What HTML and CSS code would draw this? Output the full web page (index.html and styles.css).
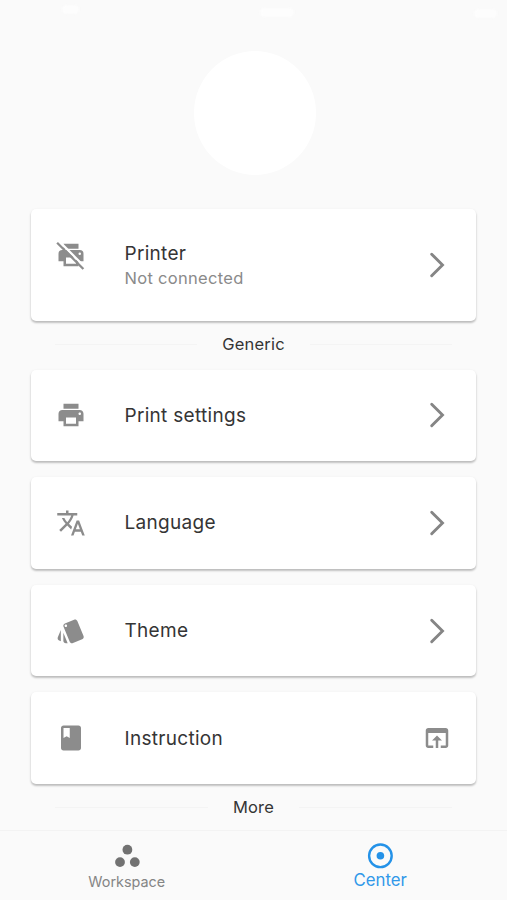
FILE: index.html
```
<!DOCTYPE html>
<html lang="en">
<head>
<meta charset="utf-8">
<title>Center</title>
<link rel="stylesheet" href="styles.css">
</head>
<body>
<div class="app">
  <header class="profile">
    <div class="status"><i class="carrier"></i><i class="clock"></i><i class="battery"></i></div>
    <div class="avatar"></div>
  </header>
  <main class="list">
    <section class="card card-tall">
      <svg class="icon icon-raised" viewBox="0 0 24 24"><path d="M6 3h12v4H6zM5 8h14a3 3 0 0 1 3 3v6h-4v4H6v-4H2v-6a3 3 0 0 1 3-3zm3 6v5h8v-5zm11-4a1 1 0 1 0 0 2a1 1 0 0 0 0-2z"/><path class="gap" d="M2.4.9 23.1 21.6"/><path class="slash" d="M.9 2.2 21.9 23.2"/></svg>
      <div class="label"><span class="title">Printer</span><span class="sub">Not connected</span></div>
      <svg class="trail" viewBox="0 0 30 30"><path class="chevron" d="M9.7 4.2 20.5 15 9.7 25.8"/></svg>
    </section>
    <div class="divider"><hr><span>Generic</span><hr></div>
    <section class="card">
      <svg class="icon" viewBox="0 0 24 24"><path d="M19 8H5c-1.66 0-3 1.34-3 3v6h4v4h12v-4h4v-6c0-1.66-1.34-3-3-3zm-3 11H8v-5h8v5zm3-7c-.55 0-1-.45-1-1s.45-1 1-1 1 .45 1 1-.45 1-1 1zm-1-9H6v4h12V3z"/></svg>
      <div class="label"><span class="title">Print settings</span></div>
      <svg class="trail" viewBox="0 0 30 30"><path class="chevron" d="M9.7 4.2 20.5 15 9.7 25.8"/></svg>
    </section>
    <section class="card">
      <svg class="icon" viewBox="0 0 24 24"><path d="M12.87 15.07l-2.54-2.51.03-.03c1.74-1.94 2.98-4.17 3.71-6.53H17V4h-7V2H8v2H1v1.99h11.17C11.5 7.92 10.44 9.75 9 11.35 8.07 10.32 7.3 9.19 6.69 8h-2c.73 1.63 1.73 3.17 2.98 4.56l-5.09 5.02L4 19l5-5 3.11 3.11.76-2.04zM18.5 10h-2L12 22h2l1.12-3h4.75L21 22h2l-4.5-12zm-2.62 7l1.62-4.33L19.12 17h-3.24z"/></svg>
      <div class="label"><span class="title">Language</span></div>
      <svg class="trail" viewBox="0 0 30 30"><path class="chevron" d="M9.7 4.2 20.5 15 9.7 25.8"/></svg>
    </section>
    <section class="card">
      <svg class="icon" viewBox="0 0 24 24"><path d="M2.53 19.65l1.34.56v-9.03l-2.43 5.86c-.41 1.02.08 2.19 1.09 2.61zm19.5-3.7L17.07 3.98c-.31-.75-1.04-1.21-1.81-1.23-.26 0-.53.04-.79.15L7.1 5.95c-.75.31-1.21 1.03-1.23 1.8-.01.27.04.54.15.8l4.96 11.97c.31.76 1.05 1.22 1.83 1.23.26 0 .52-.05.77-.15l7.36-3.05c1.02-.42 1.51-1.59 1.09-2.6zM7.88 8.75c-.55 0-1-.45-1-1s.45-1 1-1 1 .45 1 1-.45 1-1 1zm-2 11c0 1.1.9 2 2 2h1.45l-3.45-8.34v6.34z"/></svg>
      <div class="label"><span class="title">Theme</span></div>
      <svg class="trail" viewBox="0 0 30 30"><path class="chevron" d="M9.7 4.2 20.5 15 9.7 25.8"/></svg>
    </section>
    <section class="card">
      <svg class="icon" viewBox="0 0 24 24"><path d="M18 2H6c-1.1 0-2 .9-2 2v16c0 1.1.9 2 2 2h12c1.1 0 2-.9 2-2V4c0-1.1-.9-2-2-2zM6 4h5v8l-2.5-1.5L6 12V4z"/></svg>
      <div class="label"><span class="title">Instruction</span></div>
      <svg class="trail" viewBox="0 0 24 24"><path d="M19 4H5c-1.11 0-2 .9-2 2v12c0 1.1.89 2 2 2h4v-2H5V8h14v10h-4v2h4c1.1 0 2-.9 2-2V6c0-1.1-.89-2-2-2zm-7 6l-4 4h3v6h2v-6h3l-4-4z"/></svg>
    </section>
    <div class="divider"><hr><span>More</span><hr></div>
  </main>
  <nav class="tabs">
    <a class="tab"><svg viewBox="0 0 30 30"><circle cx="15.4" cy="8.7" r="4.9"/><circle cx="8" cy="21.1" r="4.9"/><circle cx="22.8" cy="21.1" r="4.9"/></svg><span>Workspace</span></a>
    <a class="tab active"><svg viewBox="0 0 30 30"><circle class="ring" cx="15.4" cy="14.8" r="11.3"/><circle cx="15.4" cy="14.8" r="3.8"/></svg><span>Center</span></a>
  </nav>
</div>
</body>
</html>
```

FILE: styles.css
```
body {
  margin: 0;
  background: #fafafa;
  color: #353535;
  font-family: Inter, "Liberation Sans", sans-serif;
}
.app {
  height: 900px;
  display: flex;
  flex-direction: column;
  overflow: hidden;
}
.profile {
  height: 209px;
  flex: none;
  display: flex;
  flex-direction: column;
  align-items: center;
}
.status {
  width: 475px;
  height: 51px;
  display: flex;
  justify-content: space-between;
  padding-top: 8px;
  box-sizing: border-box;
}
.status i {
  height: 9px;
  border-radius: 5px;
  background: #fdfdfd;
  filter: blur(1px);
}
.carrier { width: 17px; margin-left: 46px; margin-top: -3px; }
.clock { width: 34px; }
.battery { width: 23px; margin: 1px -6px 0 0; }
.avatar {
  width: 122px;
  height: 124px;
  margin-left: 2px;
  border-radius: 50%;
  background: #fff;
}
.list {
  flex: 1;
  min-height: 0;
  padding: 0 31px;
}
.card {
  height: 91.6px;
  box-sizing: border-box;
  margin-bottom: 16px;
  padding: 0 24px 0 25px;
  display: flex;
  align-items: center;
  background: #fff;
  border-radius: 5px;
  box-shadow: 0 2px 2px rgba(0, 0, 0, .19), 0 1px 3px rgba(0, 0, 0, .1);
}
.card-tall { height: 112px; }
.card-tall .label { padding-top: 2px; }
.icon, .trail {
  width: 30px;
  height: 30px;
  flex: none;
  fill: #8c8c8c;
}
.icon-raised { margin-bottom: 20px; }
.gap, .slash { stroke-width: 1.8; }
.gap { stroke: #fff; }
.slash { stroke: #8c8c8c; }
.chevron {
  fill: none;
  stroke: #858585;
  stroke-width: 2.9;
  stroke-linecap: round;
}
.label {
  flex: 1;
  margin-left: 38.5px;
  display: flex;
  flex-direction: column;
}
.title {
  font-size: 19px;
  line-height: 25px;
  letter-spacing: .3px;
}
.sub {
  font-size: 16.5px;
  line-height: 25px;
  letter-spacing: .3px;
  color: #8a8a8a;
}
.divider {
  height: 15px;
  margin: 0 24px 17.6px;
  display: flex;
  align-items: center;
  gap: 25px;
  font-size: 16.5px;
  line-height: 15px;
  letter-spacing: .2px;
}
.divider hr {
  flex: 1;
  height: 1px;
  margin: 0;
  border: 0;
  background: #f4f4f4;
}
.tabs {
  height: 69px;
  display: flex;
  border-top: 1px solid #f3f3f3;
  background: #fafafa;
  flex: none;
}
.tab {
  flex: 1;
  display: flex;
  flex-direction: column;
  align-items: center;
  padding-top: 10px;
  fill: #727272;
  color: #858585;
  font-size: 14.4px;
}
.tab svg { width: 30px; height: 30px; }
.tab span { line-height: 21px; }
.active {
  fill: #2492e8;
  color: #3098e9;
  font-size: 16.8px;
}
.active span { line-height: 19px; }
.ring { fill: none; stroke: #2492e8; stroke-width: 2.4; }
```
